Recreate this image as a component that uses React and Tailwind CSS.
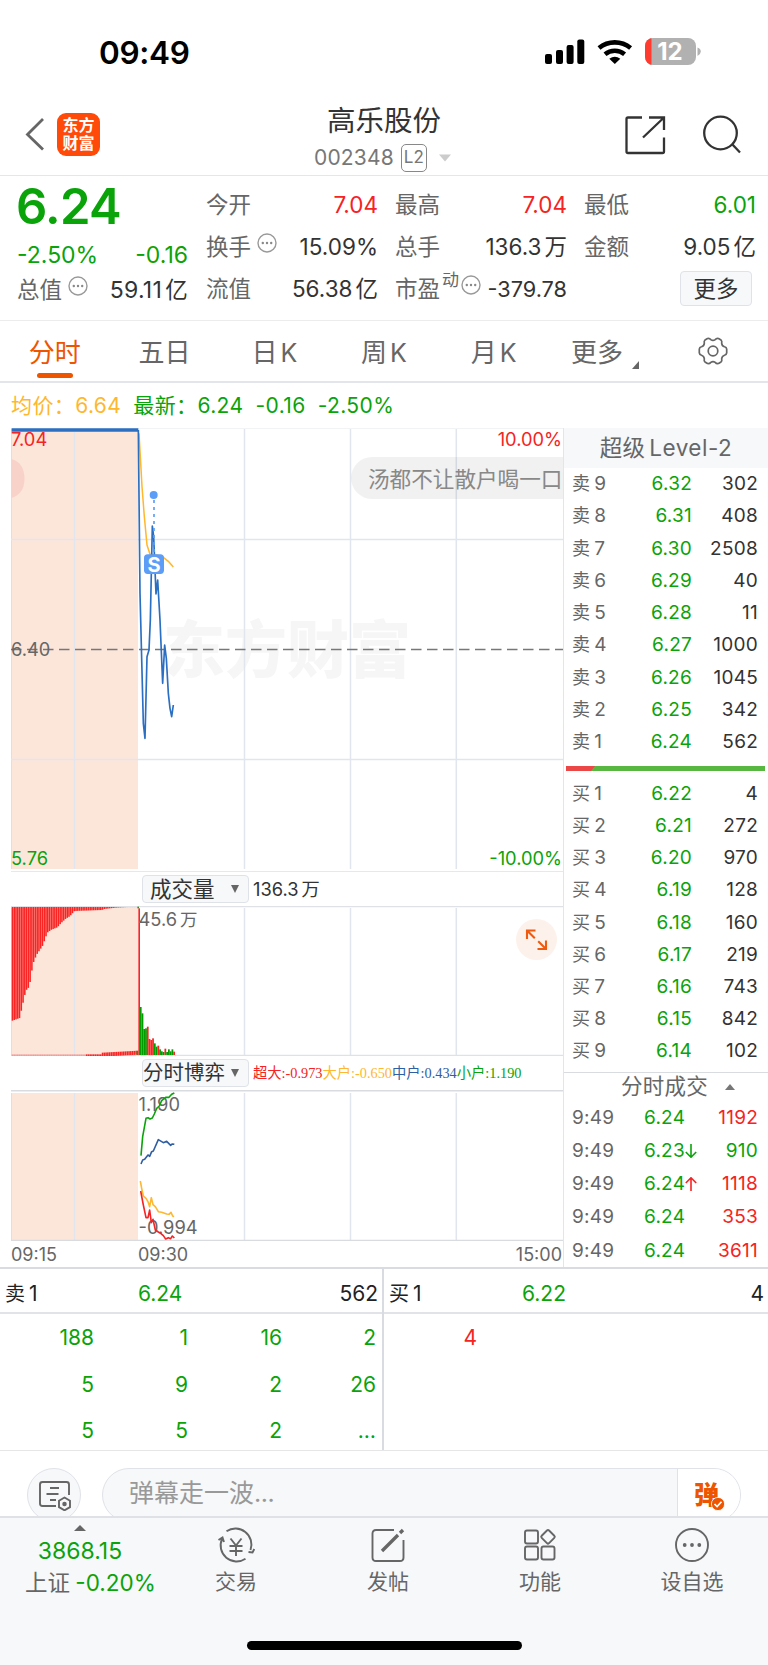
import { clsx } from "clsx";

const GREEN = "#0aa30a";
const RED = "#f52323";

const stats = [
  { label: "今开", value: "7.04", tone: "text-[#f52323]" },
  { label: "最高", value: "7.04", tone: "text-[#f52323]" },
  { label: "最低", value: "6.01", tone: "text-[#0aa30a]" },
  { label: "换手", value: "15.09%", info: true },
  { label: "总手", value: "136.3", unit: "万" },
  { label: "金额", value: "9.05", unit: "亿" },
  { label: "流值", value: "56.38", unit: "亿" },
  { label: "市盈", value: "-379.78", sup: "动", info: true, tone: "text-[21.7px]" },
];

const tabs = ["分时", "五日", "日K", "周K", "月K"];

const asks = [
  [9, "6.32", 302],
  [8, "6.31", 408],
  [7, "6.30", 2508],
  [6, "6.29", 40],
  [5, "6.28", 11],
  [4, "6.27", 1000],
  [3, "6.26", 1045],
  [2, "6.25", 342],
  [1, "6.24", 562],
];

const bids = [
  [1, "6.22", 4],
  [2, "6.21", 272],
  [3, "6.20", 970],
  [4, "6.19", 128],
  [5, "6.18", 160],
  [6, "6.17", 219],
  [7, "6.16", 743],
  [8, "6.15", 842],
  [9, "6.14", 102],
];

const trades = [
  { price: "6.24", amount: 1192, up: true },
  { price: "6.23", amount: 910, up: false, arrow: "down" },
  { price: "6.24", amount: 1118, up: true, arrow: "up" },
  { price: "6.24", amount: 353, up: true },
  { price: "6.24", amount: 3611, up: true },
];

const askQueue = ["188", "1", "16", "2", "5", "9", "2", "26", "5", "5", "2", "…"];

// lower edge of the unmatched auction volume, as [x, y]
const auctionEdge = [
  [35, 842], [57, 834], [63, 805], [75, 752], [86, 740], [91, 705], [97, 670], [107, 645],
  [117, 630], [127, 615], [133, 595], [141, 577], [152, 569], [170, 562], [181, 549],
  [195, 536], [207, 529], [221, 513], [304, 510], [310, 507], [345, 503], [390, 501], [415, 500],
];

const edgeAt = (x) => {
  const i = auctionEdge.findIndex(([px]) => px >= x);
  if (i <= 0) return auctionEdge[0][1];
  const [x0, y0] = auctionEdge[i - 1];
  const [x1, y1] = auctionEdge[i];
  return y0 + ((y1 - y0) * (x - x0)) / (x1 - x0);
};

const auctionBars = Array.from({ length: 71 }, (_, i) => 35 + i * 5.3);

const volumeBars = [
  [801, 0], [820, 0], [867, 0], [865, 0], [860, 1], [897, 1], [900, 1], [895, 1], [910, 0], [920, 0],
  [917, 1], [928, 0], [934, 0], [936, 0], [926, 1], [936, 0], [928, 0], [934, 0], [928, 0], [935, 1],
];

const InfoIcon = ({ className }) => (
  <svg className={clsx("h-5 w-5 shrink-0", className)} viewBox="0 0 20 20">
    <circle cx="10" cy="10" r="9" fill="none" stroke="#999" strokeWidth="1.4" />
    <circle cx="5.8" cy="10" r="1.2" fill="#888" />
    <circle cx="10" cy="10" r="1.2" fill="#888" />
    <circle cx="14.2" cy="10" r="1.2" fill="#888" />
  </svg>
);

const StatusBar = () => (
  <div className="flex h-[100px] items-start justify-between pl-[99px] pr-[67px]">
    <div className="mt-[33px] text-[31.5px] leading-10 font-semibold tracking-[-0.3px] text-black">09:49</div>
    <svg className="mt-[36px] h-8 w-[158px]" viewBox="543 36 158 32">
      <rect x="545" y="54" width="7" height="10" rx="2" />
      <rect x="556" y="50" width="7" height="14" rx="2" />
      <rect x="566.6" y="45" width="7" height="19" rx="2" />
      <rect x="577.3" y="39.5" width="7" height="24.5" rx="2" />
      <g fill="none" stroke="#000" strokeWidth="4.6">
        <path d="M599 48a25 25 0 0 1 31.600 0" />
        <path d="M605 54.300a15.500 15.500 0 0 1 19.600 0" />
      </g>
      <path d="M609.300 58.800a9 9 0 0 1 11 0l-5.500 5.300z" />
      <clipPath id="battery">
        <rect x="645" y="38" width="51" height="27" rx="8" />
      </clipPath>
      <g clipPath="url(#battery)">
        <rect x="645" y="38" width="51" height="27" fill="#b1b1b1" />
        <rect x="645" y="38" width="6.500" height="27" fill="#ff3b30" />
      </g>
      <path d="M697.500 47.500q3.500 1.500 3.300 4.200t-3.300 4.200z" fill="#b1b1b1" />
      <text x="670" y="60.300" textAnchor="middle" fontSize="24" fontWeight="700" fill="#fff">12</text>
    </svg>
  </div>
);

const Header = () => (
  <header className="flex h-[76px] items-start justify-between border-b border-[#e6e6e6]">
    <div className="flex w-[200px] items-center pt-[13px] pl-[25px]">
      <svg className="h-[34px] w-5" viewBox="0 0 20 34" fill="none" stroke="#666" strokeWidth="2.800">
        <path d="M18 2 2.500 17.500 18 32.500" />
      </svg>
      <div className="ml-3 flex h-[43px] w-[43px] flex-col items-center justify-center rounded-[9px] bg-[#ff4a0a] text-[16px] leading-[18px] font-bold text-white">
        <span>东方</span>
        <span>财富</span>
      </div>
    </div>
    <div className="flex flex-col items-center pt-px">
      <h1 className="text-[28.5px] leading-10 text-[#333]">高乐股份</h1>
      <div className="flex h-[34px] items-center pr-[3px] text-[21px] tracking-[0.2px] text-[#777]">
        002348
        <span className="ml-[7px] flex h-[28px] w-[26px] items-center justify-center rounded-[5px] border border-[#888] text-[17px]">L2</span>
        <svg className="ml-3 h-2 w-3" viewBox="0 0 12 8"><path d="M0 .5h12L6 7.500z" fill="#ccc" /></svg>
      </div>
    </div>
    <div className="flex w-[200px] justify-end pt-[15px] pr-[27px]">
      <svg className="h-10 w-[116px]" viewBox="625 115 116 40" fill="none" stroke="#333" strokeWidth="2.300">
        <path d="M642 117.500h-14q-1.500 0-1.500 1.500v32.500q0 1.500 1.500 1.500h34.500q1.500 0 1.500-1.500V137.500M649 117.500h15V130M664 117.500l-21 20" />
        <circle cx="720.500" cy="133" r="16.300" />
        <path d="m732 144 8 8.500" />
      </svg>
    </div>
  </header>
);

const Quote = () => (
  <section className="flex h-[145px] border-b border-[#ececec] pl-[17px]">
    <div className="w-[171px] text-[#0aa30a]">
      <div className="mt-[2px] -ml-px text-[49px] leading-[58px] font-semibold tracking-[-0.7px]">6.24</div>
      <div className="flex h-[37px] items-center justify-between pt-px text-[23px]">
        <span>-2.50%</span>
        <span>-0.16</span>
      </div>
      <div className="-mt-px flex h-9 items-center text-[22.5px] text-[#333]">
        <span className="text-[#666]">总值</span>
        <InfoIcon className="ml-1.5 -mt-2" />
        <span className="ml-auto text-[23px] tracking-[0.3px]">59.11<span className="ml-[3px] text-[22.5px]">亿</span></span>
      </div>
    </div>
    <div className="ml-[18px] grid h-[134px] w-[550px] grid-cols-[172px_172px_172px] grid-rows-3 gap-x-[17px] pt-[8px] text-[22.5px] text-[#333]">
      {stats.map((s) => (
        <div key={s.label} className="flex items-center justify-between">
          <span className="flex items-center text-[22.5px] text-[#666]">
            {s.label}
            {s.sup && <span className="-mt-4 ml-0.5 text-[17px]">{s.sup}</span>}
            {s.info && <InfoIcon className={s.sup ? "ml-0.5 -mt-2" : "ml-1.5 -mt-2"} />}
          </span>
          <span className={s.tone}>
            {s.value}
            {s.unit && <span className="ml-[3px]">{s.unit}</span>}
          </span>
        </div>
      ))}
      <div className="flex items-center justify-end pr-1">
        <button className="h-[35px] w-[72px] rounded-[4px] border border-[#dfe2e8] bg-[#f6f8fa] text-[22.5px] leading-8">更多</button>
      </div>
    </div>
  </section>
);

const Tabs = () => (
  <nav className="grid h-[63px] grid-cols-7 border-b-2 border-[#e3e5ec] text-[26px] text-[#666]">
    {tabs.map((t, i) => (
      <div key={t} className={clsx("flex flex-col items-center pt-[11px] leading-[41px]", i === 0 && "text-[#ee5500]")}>
        {t.endsWith("K") ? <span>{t[0]}<span className="ml-[3px] text-[25px]">K</span></span> : <span>{t}</span>}
        {i === 0 && <span className="h-[5px] w-9 rounded-full bg-[#ee5500]" />}
      </div>
    ))}
    <div className="flex justify-center pt-[11px] pl-[3px] leading-[41px]">
      更多
      <svg className="mt-[29px] ml-[9px] h-2 w-[7px]" viewBox="0 0 7 8"><path d="M7 0v8H0z" fill="#666" /></svg>
    </div>
    <div className="flex justify-center pt-[16px]">
      <svg className="h-7 w-[30px]" viewBox="0 0 30 28" fill="none" stroke="#666" strokeWidth="1.700" strokeLinejoin="round">
        <path d="M9.500 1.500Q11.500 1 12.800 2.600 15 4.200 17.200 2.600 18.500 1 20.500 1.500L23 3Q24.200 4.300 23.700 6.300 24 9 26.500 9.800 28.500 10.300 28.700 12.200V15.800Q28.500 17.700 26.500 18.200 24 19 23.700 21.700 24.200 23.700 23 25L20.500 26.500Q18.500 27 17.200 25.400 15 23.800 12.800 25.400 11.500 27 9.500 26.500L7 25Q5.800 23.700 6.300 21.700 6 19 3.500 18.200 1.500 17.700 1.300 15.800V12.200Q1.500 10.300 3.500 9.800 6 9 6.300 6.300 5.800 4.300 7 3z" />
        <circle cx="15" cy="14" r="4.800" />
      </svg>
    </div>
  </nav>
);

const Grid = ({ top, bottom }) => (
  <>
    <rect x="11.500" y={top} width="126.500" height={bottom - top} fill="#fce6da" />
    {[74.5, 244.5, 350.5, 456.3].map((x) => (
      <line key={x} x1={x} x2={x} y1={top} y2={bottom} stroke="#e1e5ed" strokeWidth="1.500" />
    ))}
    <line x1="11.500" x2="11.500" y1={top} y2={bottom} stroke="#dcdfe6" />
  </>
);

const PriceChart = () => (
  <svg className="block h-[444px] w-[563px]" viewBox="0 428 563 444">
    <text x="163" y="672.500" fontSize="62" fontWeight="900" fill="#f6f6f7">东方财富</text>
    <Grid top={429} bottom={869} />
    <path d="M11 539.500h552M11 759.500h552" stroke="#e1e5ed" strokeWidth="1.500" />
    <path d="M11 428h552M11 871.500h552" stroke="#e6e8ec" />
    <path d="M11 649.500h552" stroke="#777" strokeWidth="1.300" strokeDasharray="10.500 5.500" />
    <path d="M11.500 459q13 4 13 19.500t-13 19.500z" fill="#f8d2c8" />
    <path d="M563 457H372a21 21 0 0 0 0 42h191z" fill="#000" fillOpacity=".055" />
    <g transform="translate(0 420) scale(.33333)" fill="none" strokeLinejoin="round">
      <path d="M417 40 426 200 433 290 441 375 450 403 470 405 490 412 505 424 520 441" stroke="#ffb72e" strokeWidth="4.500" />
      <path d="M35 30H415" stroke="#2b6fc2" strokeWidth="10" />
      <path d="M415 30 420 520 430 910 435 955 441 710 447 690 451 600 457 318 461 350 468 522 473 480 480 600 488 790 494 675 499 715 505 820 510 865 515 890 520 855" stroke="#2b6fc2" strokeWidth="5" />
      <path d="M462 240V400" stroke="#5c9df8" strokeWidth="5" strokeDasharray="9 12" />
      <circle cx="461" cy="225" r="12" fill="#5c9df8" />
      <rect x="432" y="403" width="60" height="59" rx="11" fill="#5c9df8" />
    </g>
    <text x="154" y="571.500" textAnchor="middle" fontSize="20" fontWeight="700" fill="#fff">S</text>
    <g fontSize="18.300">
      <text x="11" y="446" fill={RED}>7.04</text>
      <text x="562" y="446" textAnchor="end" fill={RED}>10.00%</text>
      <text x="11" y="655.500" fill="#666">6.40</text>
      <text x="11" y="865" fill={GREEN}>5.76</text>
      <text x="562" y="865" textAnchor="end" fill={GREEN}>-10.00%</text>
    </g>
    <text x="368" y="487" fontSize="21.600" fill="#888">汤都不让散户喝一口</text>
  </svg>
);

const VolumeChart = () => (
  <svg className="block h-[150px] w-[563px]" viewBox="0 906 563 150">
    <Grid top={908} bottom={1055} />
    <path d="M11 906.500h552M11 1055.500h552" stroke="#dfe1e6" strokeWidth="1.300" />
    <g transform="translate(0 740) scale(.33333)">
      {auctionBars.map((x) => (
        <rect key={x} x={x} y="501" width="4.700" height={Math.max(edgeAt(x) - 501, 0.5)} fill="#f92525" />
      ))}
      {auctionBars.map((x) => (
        <rect key={x} x={x} y={x > 305 ? 938 - (x - 305) / 18 : 943} width="4.700" height="12" fill="#f92525" opacity={x > 255 ? 1 : 0.35} />
      ))}
      <rect x="412" y="500" width="5" height="5" fill={GREEN} />
      <rect x="410" y="932" width="5" height="13" fill={GREEN} />
      <rect x="415" y="505" width="5" height="440" fill="#f92525" />
      {volumeBars.map(([y, red], i) => (
        <rect key={i} x={419.500 + i * 5.280} y={y} width="5.300" height={945 - y} fill={red ? "#f92525" : "#009c00"} />
      ))}
    </g>
    <text x="138.500" y="926" fontSize="18.300" fill="#666">45.6<tspan dx="3" fontSize="17.500">万</tspan></text>
    <circle cx="536.500" cy="939.500" r="20.500" fill="#fdf1eb" />
    <path d="M535.500 930.500h-8.500v8.500M527 930.500l7.800 7.800M546 940.500v8.500h-8.500M546 949l-7.800-7.800" fill="none" stroke="#f05a10" strokeWidth="2.100" />
  </svg>
);

const GameChart = () => (
  <svg className="block h-[151px] w-[563px]" viewBox="0 1090 563 151">
    <Grid top={1093} bottom={1240} />
    <path d="M11 1090.700h552M11 1240.500h552" stroke="#d8dbe0" strokeWidth="1.500" />
    <g fontSize="18.300" fill="#666">
      <text x="138.500" y="1110.500">1.190</text>
      <text x="138.500" y="1233.500">-0.994</text>
    </g>
    <g transform="translate(0 1050) scale(.33333)" fill="none" strokeWidth="4.800" strokeLinejoin="round">
      <path d="M423 317 428 260 438 205 444 203 450 207 457 204 463 192 470 175 478 168 485 152 497 142 507 142 515 133 523 129" stroke={GREEN} />
      <path d="M423 342 428 330 434 328 444 315 449 319 455 305 460 303 475 269 490 278 500 274 512 286 517 282 523 283" stroke="#2f5ea3" />
      <path d="M421 393 425 415 430 438 438 445 444 455 449 470 454 443 459 464 466 470 475 485 485 487 500 492 507 493 513 487 518 498 522 500" stroke="#ffb72e" />
      <path d="M422 423 430 465 438 503 444 503 449 480 454 518 459 508 466 540 475 546 482 550 490 557 497 567 505 563 512 566 517 558 523 564" stroke={RED} />
    </g>
  </svg>
);

const IndicatorSelect = ({ name }) => (
  <button className="flex h-7 w-[107px] shrink-0 items-center justify-between rounded-[4px] border border-[#dfe2e8] bg-[#f6f8fa] pr-[9px] text-[#333]">
    <span className={clsx("text-left whitespace-nowrap", name.length > 3 ? "text-[20.5px]" : "pl-[7px] text-[21.5px]")}>{name}</span>
    <svg className="h-2 w-2 shrink-0" viewBox="0 0 8 8"><path d="M0 0h8L4 8z" fill="#666" /></svg>
  </button>
);

const BookRow = ({ side, row }) => (
  <div className="flex flex-1 items-center">
    <span className="w-[50px] text-[18px] text-[#666]">{side}<span className="ml-1 text-[19px]">{row[0]}</span></span>
    <span className="w-[70px] text-right text-[#0aa30a]">{row[1]}</span>
    <span className="w-[66px] text-right text-[#333]">{row[2]}</span>
  </div>
);

const OrderBook = () => (
  <aside className="flex w-[205px] flex-col border-l border-[#e1e5ed] text-[19px] tracking-[0.25px]">
    <div className="flex h-[40px] items-center justify-center bg-[#f6f8fa] text-[22.5px] text-[#666]">超级<span className="ml-1 tracking-[0.5px]">Level-2</span></div>
    <div className="flex h-[290px] flex-col pl-[8px]">
      {asks.map((row) => <BookRow key={row[0]} side="卖" row={row} />)}
    </div>
    <div className="mt-[8px] ml-[2px] flex h-[5px] w-[199px] bg-[#57b741]">
      <svg className="h-[5px] w-[29px]" viewBox="0 0 29 5"><path d="M0 0h29l-4 5H0z" fill="#ec4747" /></svg>
    </div>
    <div className="mt-[7px] flex h-[289px] flex-col pl-[8px]">
      {bids.map((row) => <BookRow key={row[0]} side="买" row={row} />)}
    </div>
    <div className="mt-[5px] flex h-[29px] items-center justify-center border-t border-[#d8dbe0] pb-[3px] pl-6 text-[21.5px] text-[#666]">
      分时成交
      <svg className="mt-0.5 ml-[17px] h-[6px] w-[10px]" viewBox="0 0 10 6"><path d="M0 6h10L5 0z" fill="#777" /></svg>
    </div>
    <div className="flex h-[166px] flex-col pl-[8px]">
      {trades.map((t, i) => (
        <div key={i} className="flex flex-1 items-center">
          <span className="w-[72px] text-[#666]">9:49</span>
          <span className="flex w-[55px] items-center text-[#0aa30a]">
            {t.price}
            {t.arrow && (
              <svg className="h-[14px] w-3" viewBox="0 0 12 14" fill="none" stroke={t.arrow === "up" ? RED : GREEN} strokeWidth="1.600">
                <path d={t.arrow === "up" ? "M6 14V1M.800 6 6 .800 11.200 6" : "M6 0v13M.800 8 6 13.200 11.200 8"} />
              </svg>
            )}
          </span>
          <span className={clsx("w-[59px] text-right", t.up ? "text-[#f52323]" : "text-[#0aa30a]")}>{t.amount}</span>
        </div>
      ))}
    </div>
  </aside>
);

const Charts = () => (
  <section className="flex h-[839px]">
    <div className="flex w-[563px] shrink-0 flex-col">
      <PriceChart />
      <div className="flex h-[34px] items-center pl-[142px] text-[18.3px] text-[#333]">
        <IndicatorSelect name="成交量" />
        <span className="ml-1">136.3<span className="ml-[3px]">万</span></span>
      </div>
      <VolumeChart />
      <div className="flex h-[34px] items-center pl-[142px]">
        <IndicatorSelect name="分时博弈" />
        <div className="ml-1 whitespace-nowrap font-['Liberation_Serif','Noto_Sans_CJK_SC',serif] text-[14.3px] leading-5">
          <span className="text-[#f52323]">超大:-0.973</span>
          <span className="text-[#ffb72e]">大户:-0.650</span>
          <span className="text-[#2f5ea3]">中户:0.434</span>
          <span className="text-[#0aa30a]">小户:1.190</span>
        </div>
      </div>
      <GameChart />
      <div className="flex h-[26px] items-center pt-px pr-px pl-[11px] text-[18px] text-[#666]">
        <span className="w-[127px]">09:15</span>
        <span>09:30</span>
        <span className="ml-auto">15:00</span>
      </div>
    </div>
    <OrderBook />
  </section>
);

const QueueHead = ({ label, price, amount }) => (
  <div className="flex h-[45px] items-center border-b-2 border-[#e1e3e8] pt-[5px] pr-1 pl-[5px] text-[#222]">
    <span className="w-[133px]"><span className="text-[20px]">{label}</span><span className="ml-1">1</span></span>
    <span className="text-[#0aa30a]">{price}</span>
    <span className="ml-auto">{amount}</span>
  </div>
);

const Queue = () => (
  <section className="flex h-[184px] border-t-2 border-b border-t-[#d8dbe2] border-b-[#e6e6e6] text-[21px]">
    <div className="w-[384px] border-r-2 border-[#d8dbe2]">
      <QueueHead label="卖" price="6.24" amount="562" />
      <div className="grid grid-cols-4 pt-px pr-[6px] text-right leading-[46.5px] text-[#0aa30a]">
        {askQueue.map((n, i) => <span key={i}>{n}</span>)}
      </div>
    </div>
    <div className="w-[384px]">
      <QueueHead label="买" price="6.22" amount="4" />
      <div className="grid grid-cols-4 pt-px pr-[12px] text-right leading-[46.5px] text-[#f52323]">
        <span>4</span>
      </div>
    </div>
  </section>
);

const DanmuBar = () => (
  <section className="flex h-[65px] items-start overflow-hidden pt-[17px] pl-[27px]">
    <div className="flex h-[54px] w-[54px] shrink-0 items-center justify-center rounded-full border border-[#dfe2e8] bg-[#f6f8fa]">
      <svg className="h-[31px] w-[33px]" viewBox="0 0 33 31" fill="none" stroke="#666" strokeWidth="1.900">
        <path d="M18 26H4.500Q2 26 2 23.500V4.500Q2 2 4.500 2h24Q31 2 31 4.500V15M12 8h9M8.500 14h12M12 20h6" />
        <path d="m26.500 17.500 5.500 3.200v6.400l-5.500 3.200-5.500-3.200v-6.400z" />
        <circle cx="26.500" cy="24" r="1.300" fill="#666" />
      </svg>
    </div>
    <div className="ml-[21px] flex h-[54px] w-[639px] overflow-hidden rounded-full border border-[#dfe2e8] bg-[#f6f8fa]">
      <span className="flex-1 pt-[4px] pl-[26px] text-[25px] leading-10 text-[#999]">弹幕走一波<span className="tracking-[-0.5px]">...</span></span>
      <div className="flex w-[63px] border-l border-[#dfe2e8] bg-white pt-3 pl-4">
        <span className="text-[25px] leading-7 font-black text-[#ee5500]">弹</span>
        <svg className="mt-[16px] -ml-2 h-[14px] w-[14px] shrink-0" viewBox="0 0 14 14">
          <circle cx="7" cy="7" r="6.600" fill="#ee5500" stroke="#fff" strokeWidth=".8" />
          <path d="m3.500 7 2.600 2.600 4.400-4.800" fill="none" stroke="#fff" strokeWidth="1.700" />
        </svg>
      </div>
    </div>
  </section>
);

const navItems = [
  {
    label: "交易",
    icon: (
      <>
        <path d="M10.500 4.300A16 16 0 0 1 34.500 23M29.500 31.800A16 16 0 0 1 6 12M2.500 13 6.500 10.500 8 15M32.500 25l4 .5 1.800-3.500" />
        <path d="m14.500 11.500 5.500 7 5.500-7M13.500 19h13M13.500 24h13M20 19v10" />
      </>
    ),
  },
  {
    label: "发帖",
    icon: (
      <>
        <path d="M26 3H8Q4.500 3 4.500 6.500v24Q4.500 34 8 34h24q3.500 0 3.500-3.500V13" />
        <path d="M14 24 30 8M32 6l3-3" strokeWidth="3.300" />
      </>
    ),
  },
  {
    label: "功能",
    icon: (
      <>
        <rect x="5" y="3.500" width="13" height="13" rx="2" />
        <rect x="5" y="19.500" width="13" height="13" rx="2" />
        <rect x="21.500" y="19.500" width="13" height="13" rx="2" />
        <rect x="22.800" y="4.600" width="10.400" height="10.400" rx="1.500" transform="rotate(45 28 9.800)" />
      </>
    ),
  },
  {
    label: "设自选",
    icon: (
      <>
        <circle cx="20" cy="18" r="16" />
        <g fill="#666" stroke="none">
          <circle cx="12.700" cy="18" r="1.900" />
          <circle cx="20" cy="18" r="1.900" />
          <circle cx="27.300" cy="18" r="1.900" />
        </g>
      </>
    ),
  },
];

const BottomNav = () => (
  <footer className="h-[149px] border-t-2 border-[#dfe1e7] bg-[#f6f8fa] text-[#666]">
    <div className="flex h-[123px]">
      <div className="flex w-[160px] flex-col items-center pt-[7px]">
        <svg className="h-[6px] w-3" viewBox="0 0 12 6"><path d="M0 6h12L6 0z" fill="#666" /></svg>
        <span className="mt-[5px] text-[23px] leading-[31px] text-[#0aa30a]">3868.15</span>
        <span className="w-full pl-[25px] text-[22.5px] leading-[32px] whitespace-nowrap">
          上证 <span className="-ml-[1px] text-[#0aa30a]">-0.20%</span>
        </span>
      </div>
      <div className="flex">
        {navItems.map((item) => (
          <div key={item.label} className="flex w-[152px] flex-col items-center pt-[9px]">
            <svg className="h-9 w-10" viewBox="0 0 40 36" fill="none" stroke="#666" strokeWidth="1.900">{item.icon}</svg>
            <span className="mt-[2.5px] text-[21px] leading-8">{item.label}</span>
          </div>
        ))}
      </div>
    </div>
    <div className="mx-auto h-[9px] w-[275px] rounded-full bg-black" />
  </footer>
);

export default function App() {
  return (
    <div className="flex h-[1665px] w-[768px] flex-col overflow-hidden bg-white font-[Inter,'Noto_Sans_CJK_SC',sans-serif]">
      <StatusBar />
      <Header />
      <Quote />
      <Tabs />
      <div className="flex h-[45px] items-center gap-3 pl-[11px] text-[21px] tracking-[0.4px] text-[#0aa30a]">
        <span className="text-[#ffb72e]">均价：6.64</span>
        <span>最新：6.24</span>
        <span>-0.16</span>
        <span>-2.50%</span>
      </div>
      <Charts />
      <Queue />
      <DanmuBar />
      <BottomNav />
    </div>
  );
}
